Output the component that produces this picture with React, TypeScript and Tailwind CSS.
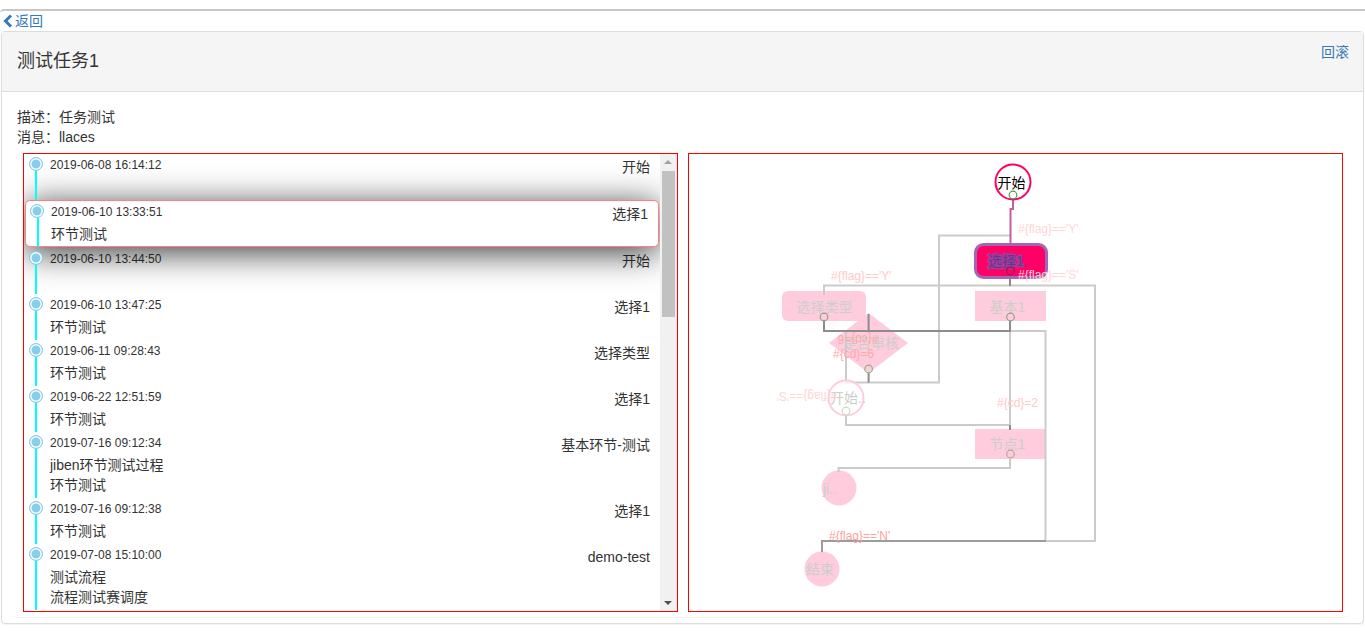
const F = "[font-family:'Liberation_Sans','Noto_Sans_CJK_SC',sans-serif]";

type Item = { date: string; title: string; lines?: string[]; active?: boolean };

const items: Item[] = [
  { date: "2019-06-08 16:14:12", title: "开始" },
  { date: "2019-06-10 13:33:51", title: "选择1", lines: ["环节测试"], active: true },
  { date: "2019-06-10 13:44:50", title: "开始" },
  { date: "2019-06-10 13:47:25", title: "选择1", lines: ["环节测试"] },
  { date: "2019-06-11 09:28:43", title: "选择类型", lines: ["环节测试"] },
  { date: "2019-06-22 12:51:59", title: "选择1", lines: ["环节测试"] },
  { date: "2019-07-16 09:12:34", title: "基本环节-测试", lines: ["jiben环节测试过程", "环节测试"] },
  { date: "2019-07-16 09:12:38", title: "选择1", lines: ["环节测试"] },
  { date: "2019-07-08 15:10:00", title: "demo-test", lines: ["测试流程", "流程测试赛调度"] },
];

function TimelineRow({ item }: { item: Item }) {
  if (item.active) {
    return (
      <div className="relative z-10 mb-px ml-px mr-px h-[47px] rounded-[5px] border border-[#ff8080] bg-white pl-[25px] pr-[10px] shadow-[0_5px_35px_rgba(0,0,0,0.8)]">
        <span className="absolute left-[11px] top-[10px] h-[36px] w-[2px] bg-[#00ffff]" />
        <span className="absolute left-[4px] top-[3px] h-[14px] w-[14px] rounded-full border border-[#87ceeb] bg-[#87ceeb] shadow-[inset_0_0_0_1.5px_#fff]" />
        <div className="flex h-[23px] items-start justify-between">
          <span className="text-xs leading-[22px]">{item.date}</span>
          <span className="mt-[2px] text-sm leading-[22px]">{item.title}</span>
        </div>
        {item.lines?.map((l) => (
          <div key={l} className="text-sm leading-[20px]">{l}</div>
        ))}
      </div>
    );
  }
  return (
    <div className="relative min-h-[46px] pb-[3px] pl-[26px] pr-[10px]">
      <span className="absolute bottom-0 left-[11px] top-[10px] z-20 w-[2px] bg-[#00ffff]" />
      <span className="absolute left-[5px] top-[3px] z-20 h-[14px] w-[14px] rounded-full border border-[#87ceeb] bg-[#87ceeb] shadow-[inset_0_0_0_1.5px_#fff]" />
      <div className="flex h-[23px] items-start justify-between">
        <span className="text-xs leading-[22px]">{item.date}</span>
        <span className="mt-px text-sm leading-[24px]">{item.title}</span>
      </div>
      {item.lines?.map((l) => (
        <div key={l} className="text-sm leading-[20px]">{l}</div>
      ))}
    </div>
  );
}

function Diagram() {
  const light = "#cbcbcb";
  const dark = "#8c8c8c";
  const pink = "#ffccdd";
  const fam = "'Liberation Sans','Noto Sans CJK SC',sans-serif";
  const Label = (p: { x: number; y: number; c?: string; children: string; s?: number; a?: "middle" | "start" }) => (
    <text x={p.x} y={p.y} fill={p.c ?? "#c9cfcb"} fontSize={p.s ?? 14} textAnchor={p.a ?? "middle"} fontFamily={fam}>
      {p.children}
    </text>
  );
  return (
    <svg viewBox="689 154 653 457" className="block h-full w-full">
      <polygon points="829,343 868.6,313 908,343 868.6,373" fill={pink} />
      <rect x="782" y="291" width="84" height="30" rx="6" fill={pink} />
      <rect x="975" y="291" width="71" height="30" fill={pink} />
      <rect x="975" y="429" width="71" height="30" fill={pink} />
      <circle cx="839" cy="488" r="17.5" fill={pink} />
      <circle cx="822" cy="569" r="17.5" fill={pink} />
      <g fill="none" strokeWidth="2">
        <polyline stroke={light} points="1010,235.5 939,235.5 939,382.5 846,382.5 846,331" />
        <polyline stroke={light} points="824,295 824,285.5 1095,285.5 1095,541 1046,541" />
        <polyline stroke={light} points="1010,331 1045.5,331 1045.5,541" />
        <polyline stroke={light} points="1010,331 1010,425 846,425 846,412" />
        <polyline stroke={light} points="1010,459 1010,468 838.5,468 838.5,472" />
        <polyline stroke={dark} points="1010,425 1010,430" />
        <polyline stroke={dark} points="824,321 824,331 1010,331 1010,321" />
        <polyline stroke={dark} points="868.6,314 868.6,331" />
        <polyline stroke={dark} points="868.6,373 868.6,382.5" />
        <polyline stroke={dark} points="1010,277 1010,286" />
        <polyline stroke="#9c9c9c" points="822,552 822,541 1046,541" />
        <polyline stroke="#c2619d" points="1013,199 1013,209 1010.5,209 1010.5,245" />
      </g>
      <circle cx="846" cy="398" r="17.5" fill="#fff" fillOpacity="0.7" stroke={pink} strokeWidth="2" />
      <rect x="975.5" y="244.5" width="71" height="33" rx="8" fill="#ff0066" stroke="#a565b5" strokeWidth="3" />
      <circle cx="1013" cy="182" r="17.5" fill="#fff" stroke="#ff0066" strokeWidth="2" />
      <Label x={1011.5} y={188} c="#000">开始</Label>
      <text x={1006} y={266} fill="#5b3a94" stroke="#a83a96" strokeWidth="3" fontSize={14} textAnchor="middle" fontFamily={fam} style={{ paintOrder: "stroke" }}>
        选择1
      </text>
      <Label x={824.5} y={312}>选择类型</Label>
      <Label x={1007.5} y={312}>基本1</Label>
      <Label x={871} y={348}>是否审核</Label>
      <Label x={848} y={403}>开始..</Label>
      <Label x={1007.5} y={449}>节点1</Label>
      <Label x={830} y={494}>ji..</Label>
      <Label x={820} y={574}>结束</Label>
      <Label x={1018} y={233} c="#ffd6d6" s={12} a="start">{"#{flag}=='Y'"}</Label>
      <Label x={831} y={280} c="#ffc9c9" s={12} a="start">{"#{flag}=='Y'"}</Label>
      <Label x={1018} y={279} c="#ffd6d6" s={12} a="start">{"#{flag}=='S'"}</Label>
      <Label x={997} y={407} c="#ffc9c9" s={12} a="start">{"#{cd}=2"}</Label>
      <Label x={833} y={358} c="#ffa8a8" s={12} a="start">{"#{cd}=6"}</Label>
      <Label x={829} y={540} c="#ff9f9f" s={12} a="start">{"#{flag}=='N'"}</Label>
      <g transform="rotate(180 807 396)">
        <Label x={807} y={400} c="#ffd6d6" s={12}>{"#{flag}=='S'"}</Label>
      </g>
      <g transform="rotate(180 858 339)">
        <Label x={858} y={343} c="#ffa8a8" s={12}>{"#{cd}=6"}</Label>
      </g>
      <g fill="none" strokeWidth="1.2">
        <circle cx="1013" cy="195" r="3.8" stroke="#43a047" fill="#fff" />
        <circle cx="1010.5" cy="271" r="3.8" stroke="#7a2a50" />
        <circle cx="824" cy="317" r="3.8" stroke="#8fa080" />
        <circle cx="1010.5" cy="317" r="3.8" stroke="#8fa080" />
        <circle cx="868.6" cy="369" r="3.8" stroke="#8fb080" />
        <circle cx="846" cy="411" r="3.8" stroke="#bfe0bf" fill="#fff" />
        <circle cx="1010.5" cy="454" r="3.8" stroke="#b0aa9a" />
      </g>
    </svg>
  );
}

export default function App() {
  return (
    <div className={`${F} h-[631px] w-[1365px] overflow-hidden bg-white pt-[9px] text-sm text-[#333]`}>
      <div className="rounded-tl-[4px] border-t-2 border-[#c8c8c8]">
        <a className="flex h-[20px] items-center pl-[2px] leading-[20px] text-[#337ab7]">
          <svg width="11" height="14" viewBox="0 0 11 14" className="mr-[2px]">
            <path d="M9 1.5 3.5 7 9 12.5" fill="none" stroke="#337ab7" strokeWidth="3" />
          </svg>
          返回
        </a>
        <div className="mx-px h-[593px] rounded-[4px] border border-[#ddd] bg-white shadow-[0_1px_1px_rgba(0,0,0,0.05)]">
          <div className="flex h-[60px] items-start justify-between border-b border-[#ddd] bg-[#f5f5f5] pl-[15px] pr-[14px]">
            <h3 className="mt-[19px] text-lg leading-[20px] font-normal">测试任务1</h3>
            <a className="mt-[10px] leading-[20px] text-[#337ab7]">回滚</a>
          </div>
          <div className="px-[15px] pt-[15px]">
            <p className="leading-[20px]">描述：任务测试</p>
            <p className="leading-[20px]">消息：llaces</p>
            <div className="mt-[6px] -ml-[4px] -mr-[1px] h-[465px] rounded-b-[6px] border-b border-[#f3f3f3] pl-[10px]">
              <div className="flex h-[459px] gap-[10px]">
                <div className="flex h-full w-[655px] overflow-hidden border border-[#ff0000]">
                  <div className="min-w-0 flex-1 overflow-hidden">
                    {items.map((it) => (
                      <TimelineRow key={it.date} item={it} />
                    ))}
                  </div>
                  <div className="relative w-[17px] shrink-0 bg-[#f1f1f1] pt-[17px]">
                    <span className="absolute left-[4px] top-[6px] h-0 w-0 border-x-[4px] border-b-[4px] border-x-transparent border-b-[#a3a3a3]" />
                    <div className="ml-[2px] h-[146px] w-[13px] bg-[#c1c1c1]" />
                    <span className="absolute bottom-[6px] left-[4px] h-0 w-0 border-x-[4px] border-t-[4px] border-x-transparent border-t-[#505050]" />
                  </div>
                </div>
                <div className="h-full w-[655px] border border-[#ff0000]">
                  <Diagram />
                </div>
              </div>
            </div>
          </div>
        </div>
      </div>
    </div>
  );
}
